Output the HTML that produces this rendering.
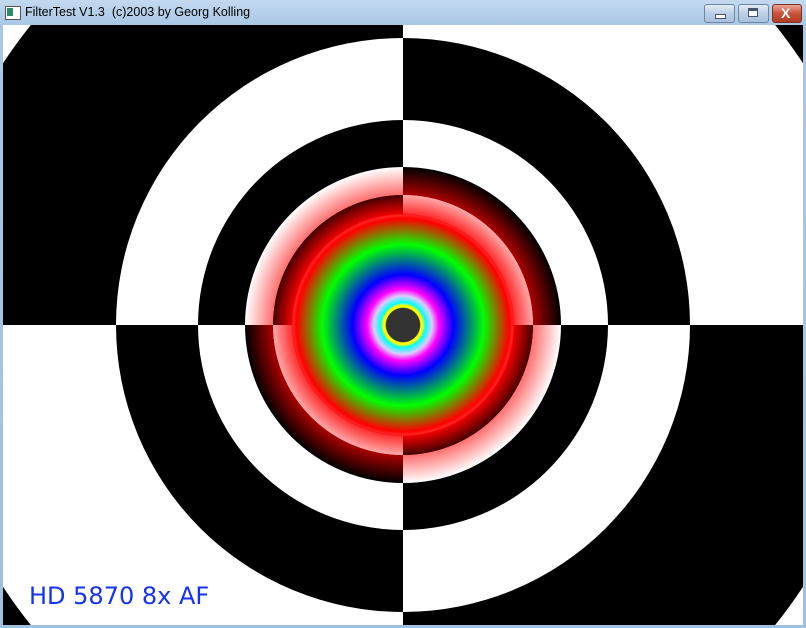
<!DOCTYPE html>
<html><head><meta charset="utf-8"><style>
html,body{margin:0;padding:0;width:806px;height:628px;overflow:hidden;background:#a9c7e3;}
.win{position:absolute;left:0;top:0;width:806px;height:628px;overflow:hidden;background:linear-gradient(#c3d9ef,#a9c8e6 24px,#9fc0e2);}
.title{position:absolute;left:25px;top:5px;font:12.5px "Liberation Sans",sans-serif;color:#000;}
.icon{position:absolute;left:5px;top:6px;width:14px;height:12px;background:#fff;border:1px solid #555;}
.icon:before{content:"";position:absolute;left:1px;top:1px;width:6px;height:8px;background:#2a8a6a;}
.btn{position:absolute;top:4px;height:17px;border:1px solid #6f86a3;border-radius:3px;overflow:hidden;background:linear-gradient(#e3ecf6,#bccfe6 50%,#a9c1de);}
.close{background:linear-gradient(#e9a592,#c9533a 50%,#b33b23);border-color:#7a3224;}
.client{position:absolute;left:3px;top:25px;width:800px;height:600px;background:#fff;overflow:hidden;}
.lbl{position:absolute;left:26px;top:557px;font:24px "DejaVu Sans","Liberation Sans",sans-serif;color:#1533ee;line-height:28px;}
</style></head><body>
<div class="win">
<div class="icon"></div>
<div class="title">FilterTest V1.3&nbsp; (c)2003 by Georg Kolling</div>
<div class="btn" style="left:704px;width:29px"><div style="position:absolute;left:10px;top:9px;width:9px;height:3px;background:#fff;border:1px solid #44546a"></div></div>
<div class="btn" style="left:738px;width:29px"><div style="position:absolute;left:9px;top:3px;width:8px;height:7px;border:1px solid #44546a;background:#fff;box-shadow:inset 0 2px 0 #44546a"></div></div>
<div class="btn close" style="left:772px;width:28px"><div style="position:absolute;left:8px;top:0px;font:bold 14px/16px 'Liberation Sans',sans-serif;color:#fff">X</div></div>
<div class="client">
<svg width="800" height="600" viewBox="3 25 800 600" xmlns="http://www.w3.org/2000/svg" style="display:block">
<defs>
<clipPath id="tl"><rect x="3" y="25" width="400" height="300"/></clipPath>
<clipPath id="tr"><rect x="403" y="25" width="400" height="300"/></clipPath>
<clipPath id="bl"><rect x="3" y="325" width="400" height="300"/></clipPath>
<clipPath id="br"><rect x="403" y="325" width="400" height="300"/></clipPath>
<radialGradient id="ga" gradientUnits="userSpaceOnUse" cx="403" cy="325" r="158">
<stop offset="0.69" stop-color="#f00"/><stop offset="0.822" stop-color="#400"/>
<stop offset="0.824" stop-color="#ff7070"/><stop offset="1" stop-color="#fff"/></radialGradient>
<radialGradient id="gb" gradientUnits="userSpaceOnUse" cx="403" cy="325" r="158">
<stop offset="0.69" stop-color="#f22"/><stop offset="0.822" stop-color="#ffa8a8"/>
<stop offset="0.824" stop-color="#a00"/><stop offset="1" stop-color="#000"/></radialGradient>
<radialGradient id="rb" gradientUnits="userSpaceOnUse" cx="403" cy="325" r="112">
<stop offset="0" stop-color="#333"/><stop offset="0.150" stop-color="#333"/>
<stop offset="0.158" stop-color="#ff0"/><stop offset="0.175" stop-color="#ff0"/>
<stop offset="0.2" stop-color="#0ff"/><stop offset="0.26" stop-color="#dcf"/>
<stop offset="0.32" stop-color="#f0f"/><stop offset="0.45" stop-color="#00f"/>
<stop offset="0.72" stop-color="#0f0"/><stop offset="0.95" stop-color="#f00"/>
<stop offset="0.98" stop-color="#f22"/><stop offset="1" stop-color="#e00"/></radialGradient>
</defs>
<g clip-path="url(#tl)"><rect x="0" y="0" width="806" height="628" fill="#fff"/><circle cx="403" cy="325" r="478" fill="#000"/><circle cx="403" cy="325" r="287" fill="#fff"/><circle cx="403" cy="325" r="205" fill="#000"/><circle cx="403" cy="325" r="158" fill="url(#ga)"/></g>
<g clip-path="url(#br)"><rect x="0" y="0" width="806" height="628" fill="#fff"/><circle cx="403" cy="325" r="478" fill="#000"/><circle cx="403" cy="325" r="287" fill="#fff"/><circle cx="403" cy="325" r="205" fill="#000"/><circle cx="403" cy="325" r="158" fill="url(#ga)"/></g>
<g clip-path="url(#tr)"><rect x="0" y="0" width="806" height="628" fill="#000"/><circle cx="403" cy="325" r="478" fill="#fff"/><circle cx="403" cy="325" r="287" fill="#000"/><circle cx="403" cy="325" r="205" fill="#fff"/><circle cx="403" cy="325" r="158" fill="url(#gb)"/></g>
<g clip-path="url(#bl)"><rect x="0" y="0" width="806" height="628" fill="#000"/><circle cx="403" cy="325" r="478" fill="#fff"/><circle cx="403" cy="325" r="287" fill="#000"/><circle cx="403" cy="325" r="205" fill="#fff"/><circle cx="403" cy="325" r="158" fill="url(#gb)"/></g>
<circle cx="403" cy="325" r="111" fill="url(#rb)"/>
</svg>
<div class="lbl">HD 5870 8x AF</div>
</div>
</div>
</body></html>
